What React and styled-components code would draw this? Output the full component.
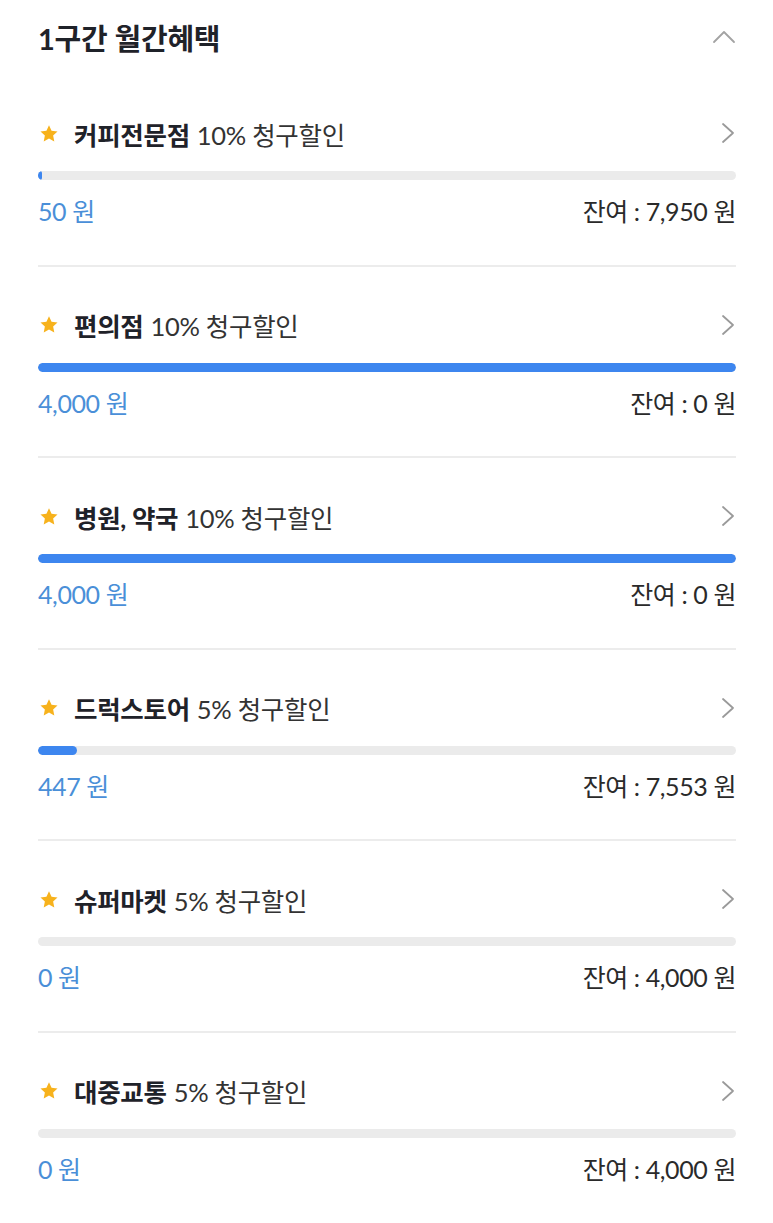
import React from 'react';
import styled, { createGlobalStyle } from 'styled-components';

const GlobalStyle = createGlobalStyle`
  html, body {
    margin: 0;
    padding: 0;
    background: #ffffff;
  }
  body {
    font-family: "Lato", "Noto Sans CJK KR", sans-serif;
    color: #222;
  }
`;

// Styles
const Page = styled.div`
  padding: 0 37px 0 38px;
`;

const Header = styled.div`
  height: 75px;
  display: flex;
  justify-content: space-between;
  align-items: center;
  padding-bottom: 1px;
  box-sizing: border-box;
`;

const Heading = styled.h2`
  margin: 0;
  font-size: 29px;
  font-weight: 700;
  color: #1f2229;
  letter-spacing: -0.2px;
`;

const Item = styled.div`
  padding: 42px 0 39.6px;
  border-top: ${p => (p.$first ? 'none' : '2px solid #ececec')};
`;

const TitleRow = styled.div`
  height: 32px;
  display: flex;
  align-items: center;
  justify-content: space-between;
`;

const TitleText = styled.div`
  display: flex;
  align-items: center;
  font-size: 25.5px;
  color: #333;
  letter-spacing: -0.3px;

  b {
    font-weight: 700;
    color: #1f2229;
    margin-right: 7px;
  }
`;

const Star = styled.span`
  display: inline-flex;
  width: 21px;
  margin: 0 14px 0 1px;
`;

const Track = styled.div`
  margin-top: 22px;
  height: 9px;
  border-radius: 5px;
  background: #ebebeb;
  overflow: hidden;
`;

const Fill = styled.div`
  height: 100%;
  border-radius: 5px;
  background: #3d86ef;
`;

const AmountRow = styled.div`
  margin-top: 15px;
  height: 30px;
  display: flex;
  align-items: center;
  justify-content: space-between;
  font-size: 25px;
  letter-spacing: -0.4px;
`;

const Used = styled.span`
  color: #4a8fd8;
`;

const Left = styled.span`
  color: #2a2a2a;
`;

const StarIcon = () => (
  <svg width="20" height="19" viewBox="0 0 24 23">
    <path
      d="M12 1.5l3.1 6.6 7.2.9-5.3 5 1.4 7.1L12 17.6l-6.4 3.5 1.4-7.1-5.3-5 7.2-.9z"
      fill="#f7b21c"
    />
  </svg>
);

const ChevronRight = () => (
  <svg width="16" height="22" viewBox="0 0 16 22">
    <path d="M3 2l10 9-10 9" fill="none" stroke="#9a9a9a" strokeWidth="1.8" strokeLinecap="round" strokeLinejoin="round" />
  </svg>
);

const ChevronUp = () => (
  <svg width="24" height="16" viewBox="0 0 24 16">
    <path d="M2 13L12 3l10 10" fill="none" stroke="#a3a3a3" strokeWidth="1.8" strokeLinecap="round" strokeLinejoin="round" />
  </svg>
);

const benefits = [
  { name: '커피전문점', rate: '10%', used: 50, limit: 8000 },
  { name: '편의점', rate: '10%', used: 4000, limit: 4000 },
  { name: '병원, 약국', rate: '10%', used: 4000, limit: 4000 },
  { name: '드럭스토어', rate: '5%', used: 447, limit: 8000 },
  { name: '슈퍼마켓', rate: '5%', used: 0, limit: 4000 },
  { name: '대중교통', rate: '5%', used: 0, limit: 4000 },
];

const fmt = n => n.toLocaleString('en-US');

const App = () => {
  return (
    <>
      <GlobalStyle />
      <Page>
        <Header>
          <Heading>1구간 월간혜택</Heading>
          <ChevronUp />
        </Header>
        {benefits.map((b, i) => (
          <Item key={b.name} $first={i === 0}>
            <TitleRow>
              <TitleText>
                <Star><StarIcon /></Star>
                <b>{b.name}</b>
                {b.rate} 청구할인
              </TitleText>
              <ChevronRight />
            </TitleRow>
            <Track>
              <Fill style={{ width: `${(b.used / b.limit) * 100}%` }} />
            </Track>
            <AmountRow>
              <Used>{fmt(b.used)} 원</Used>
              <Left>잔여 : {fmt(b.limit - b.used)} 원</Left>
            </AmountRow>
          </Item>
        ))}
      </Page>
    </>
  );
};

export default App;
